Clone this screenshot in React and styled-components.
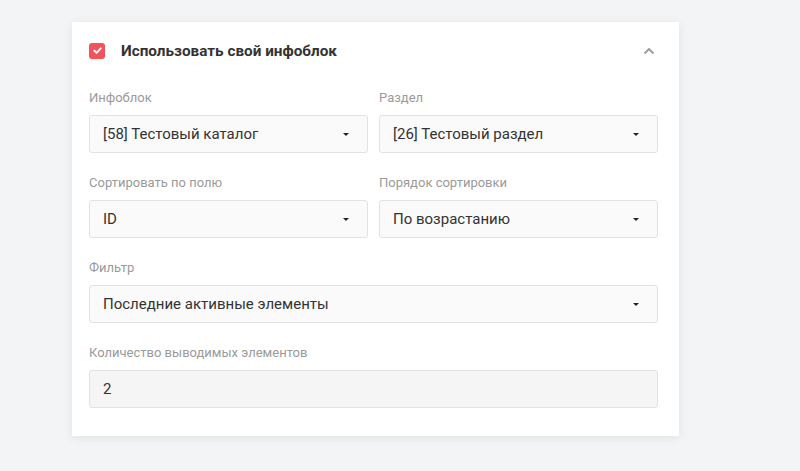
import React, { useState } from "react";
import styled, { createGlobalStyle } from "styled-components";

const GlobalStyle = createGlobalStyle`
  html, body {
    margin: 0;
    padding: 0;
    background: #f3f4f6;
    font-family: Roboto, "Noto Sans", sans-serif;
  }
`;

const Page = styled.div`
  padding: 22px 0 0 72px;
  min-height: 471px;
  box-sizing: border-box;
`;

const Card = styled.div`
  width: 607px;
  box-sizing: border-box;
  background: #fff;
  padding: 0 21px 28px 17px;
  box-shadow: 0 2px 10px rgba(0, 0, 0, 0.08);
`;

const Header = styled.div`
  display: flex;
  align-items: center;
  height: 56px;
  padding-top: 1px;
  box-sizing: border-box;
`;

const CheckBox = styled.button`
  width: 16px;
  height: 16px;
  border: none;
  border-radius: 3px;
  background: #f2525b;
  padding: 0;
  display: flex;
  align-items: center;
  justify-content: center;
  cursor: pointer;
  flex-shrink: 0;
`;

const Title = styled.div`
  margin-left: 16px;
  font-size: 15.3px;
  font-weight: 700;
  color: #333;
  flex: 1;
`;

const Collapse = styled.button`
  border: none;
  background: none;
  padding: 0;
  margin-right: 3px;
  display: flex;
  cursor: pointer;
`;

const Grid = styled.div`
  display: grid;
  grid-template-columns: 1fr 1fr;
  column-gap: 11px;
  row-gap: 22px;
  margin-top: 12px;
`;

const Field = styled.div`
  display: flex;
  flex-direction: column;
  grid-column: ${(p) => (p.$wide ? "1 / span 2" : "auto")};
`;

const Label = styled.label`
  font-size: 13px;
  line-height: 16px;
  color: #9a9a9a;
  margin-bottom: 9px;
`;

const Select = styled.div`
  height: 38px;
  box-sizing: border-box;
  border: 1px solid #e2e2e2;
  border-radius: 3px;
  background: #fafafa;
  display: flex;
  align-items: center;
  justify-content: space-between;
  padding: 0 18px 0 13px;
  font-size: 15px;
  color: #333;
  cursor: pointer;
`;

const Caret = styled.span`
  width: 0;
  height: 0;
  border-left: 3px solid transparent;
  border-right: 3px solid transparent;
  border-top: 3px solid #222;
`;

const Input = styled.input`
  height: 38px;
  box-sizing: border-box;
  border: 1px solid #e2e2e2;
  border-radius: 3px;
  background: #f5f5f5;
  padding: 0 13px;
  font-family: Roboto, "Noto Sans", sans-serif;
  font-size: 15px;
  color: #333;
  outline: none;
`;

const fields = [
  { label: "Инфоблок", value: "[58] Тестовый каталог" },
  { label: "Раздел", value: "[26] Тестовый раздел" },
  { label: "Сортировать по полю", value: "ID" },
  { label: "Порядок сортировки", value: "По возрастанию" },
  { label: "Фильтр", value: "Последние активные элементы", wide: true },
];

const App = () => {
  const [count, setCount] = useState("2");

  return (
    <>
      <GlobalStyle />
      <Page>
        <Card>
          <Header>
            <CheckBox>
              <svg width="11" height="11" viewBox="0 0 10 10">
                <path d="M2.2 5.2 L4.2 7.1 L7.9 3.1" fill="none" stroke="#fff" strokeWidth="1.8" strokeLinecap="round" strokeLinejoin="round" />
              </svg>
            </CheckBox>
            <Title>Использовать свой инфоблок</Title>
            <Collapse>
              <svg width="12" height="8" viewBox="0 0 12 8">
                <path d="M1.5 6.5 L6 2 L10.5 6.5" fill="none" stroke="#9a9a9a" strokeWidth="1.8" />
              </svg>
            </Collapse>
          </Header>
          <Grid>
            {fields.map((f) => (
              <Field key={f.label} $wide={f.wide}>
                <Label>{f.label}</Label>
                <Select>
                  {f.value}
                  <Caret />
                </Select>
              </Field>
            ))}
            <Field $wide>
              <Label>Количество выводимых элементов</Label>
              <Input value={count} onChange={(e) => setCount(e.target.value)} />
            </Field>
          </Grid>
        </Card>
      </Page>
    </>
  );
};

export default App;
